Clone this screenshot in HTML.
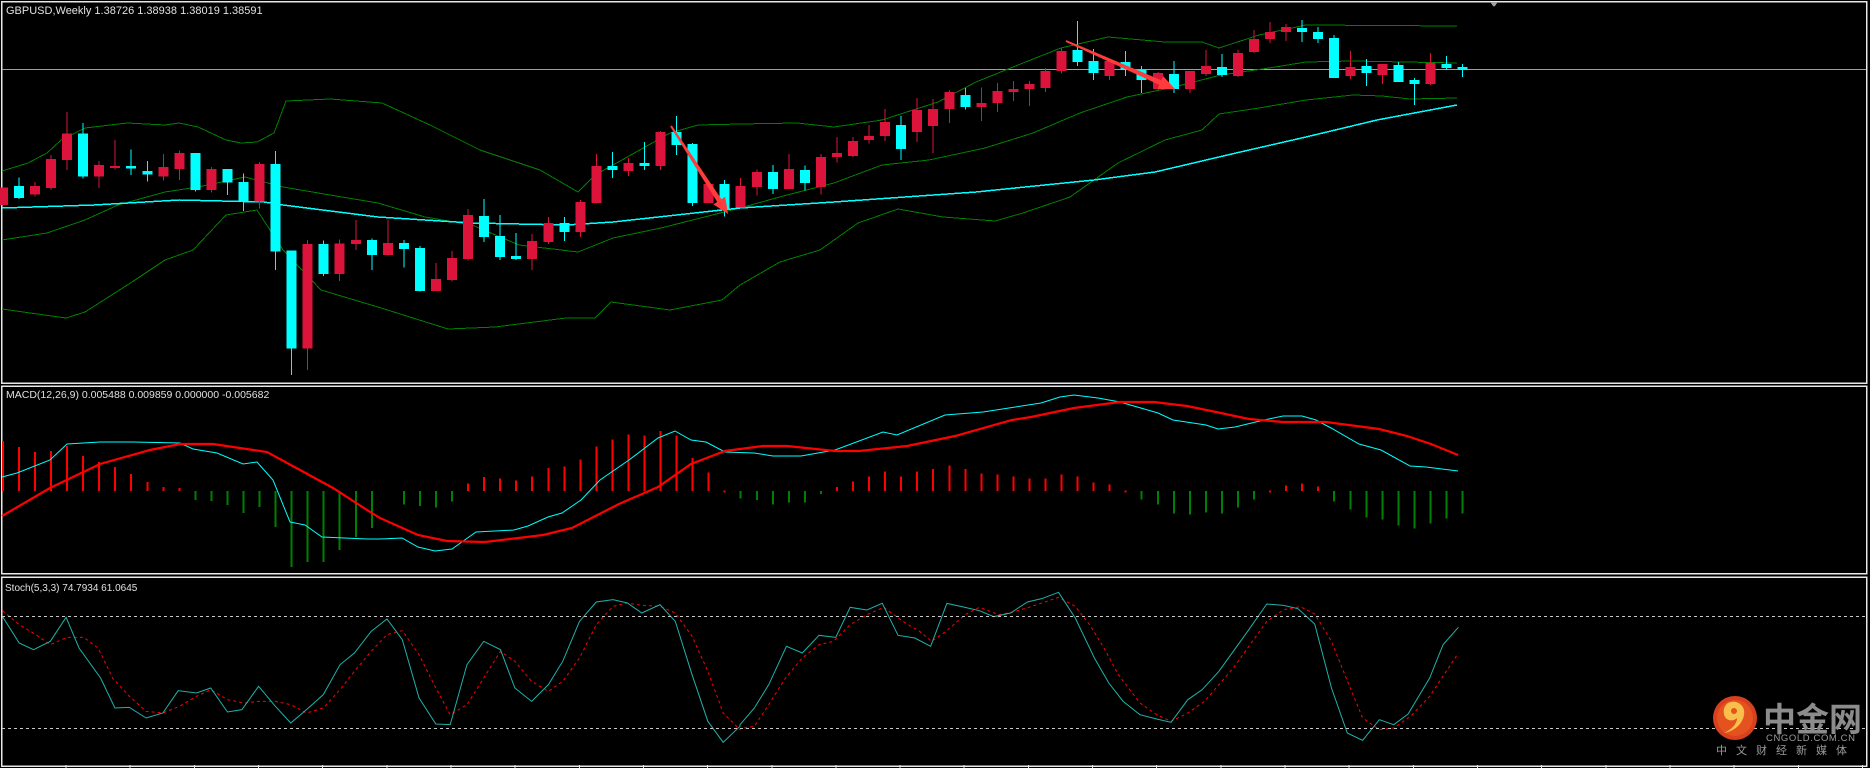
<!DOCTYPE html>
<html><head><meta charset="utf-8">
<style>
html,body{margin:0;padding:0;background:#000;width:1870px;height:768px;overflow:hidden}
svg{display:block}
text{font-family:"Liberation Sans","Noto Sans CJK SC",sans-serif}
</style></head><body>
<svg id="s" width="1870" height="768" viewBox="0 0 1870 768" xmlns="http://www.w3.org/2000/svg" shape-rendering="crispEdges">
<rect width="1870" height="768" fill="#000"/>
<g fill="none" stroke="#e8e8e8" stroke-width="1.5">
<rect x="1.5" y="1.5" width="1865" height="381.5"/>
<rect x="1.5" y="386" width="1865" height="187.5"/>
<rect x="1.5" y="577" width="1865" height="189"/>
</g>
<line x1="2" y1="69.5" x2="1866" y2="69.5" stroke="#a0a0a0" stroke-width="1"/>
<polygon points="1490,2 1498,2 1494,7" fill="#a0a0a0"/>
<g id="g"></g>
<text x="6" y="14" font-size="11" fill="#e0e0e0">GBPUSD,Weekly  1.38726 1.38938 1.38019 1.38591</text>
<text x="6" y="398" font-size="10.5" fill="#e0e0e0">MACD(12,26,9) 0.005488 0.009859 0.000000 -0.005682</text>
<text x="5" y="591" font-size="10" fill="#e0e0e0">Stoch(5,3,3) 74.7934 61.0645</text>
<line x1="2" y1="616.5" x2="1866" y2="616.5" stroke="#c8c8c8" stroke-dasharray="3,3"/>
<line x1="2" y1="728.5" x2="1866" y2="728.5" stroke="#c8c8c8" stroke-dasharray="3,3"/>
<g shape-rendering="auto">
<circle cx="1735" cy="718" r="22" fill="#d8401e"/>
<circle cx="1735" cy="718" r="18" fill="#e4531f"/>
<path d="M1728 703c8-4 18 2 16 12-2 10-10 16-20 18 8-4 13-9 13-15-4 4-12 3-13-4-1-5 1-9 4-11z" fill="#f8c04a"/>
<circle cx="1734" cy="711" r="3" fill="#e4531f"/>
<text x="1763" y="731" font-size="33" font-weight="bold" fill="#8c8c8c" font-family="'Noto Sans CJK SC',sans-serif">中金网</text>
<text x="1766" y="741" font-size="9.5" fill="#9a9a9a" letter-spacing="0.6">CNGOLD.COM.CN</text>
<text x="1716" y="754" font-size="11" fill="#9a9a9a" letter-spacing="9" font-family="'Noto Sans CJK SC',sans-serif">中文财经新媒体</text>
</g>
</svg>
<script>
var NS="http://www.w3.org/2000/svg",G=document.getElementById('g');
function el(t,a){var e=document.createElementNS(NS,t);for(var k in a)e.setAttribute(k,a[k]);G.appendChild(e);return e;}
function cx(i){return 2.9+16.04*i;}
var C1=[["R",262,315,262,315],["C",258,294,232,297],["R",258,284,246,290],["R",177,264,165,270],["R",101,180,36,210],["C",101,230,69,236],["R",195,230,183,264],["R",198,204,120,209],["C",198,206,148,225],["C",213,224,183,245],["R",201,230,162,242],["R",159,207,151,240],["C",159,270,159,275],["R",207,270,201,278],["C",207,248,207,285],["C",246,304,220,333],["R",192,304,186,326],["C",192,455,153,510],["C",452,746,452,825],["R",432,746,420,810],["C",432,522,422,528],["R",430,522,418,543],["R",420,432,360,450],["C",420,465,416,510],["R",429,465,360,466],["C",429,447,420,503],["C",444,573,438,575],["R",537,573,489,573],["R",474,540,453,544],["R",345,477,327,482],["C",348,411,297,426],["C",408,471,345,480],["C",468,477,399,480],["R",423,477,402,510],["R",369,426,351,432],["C",369,396,351,423],["R",306,396,300,411],["R",198,309,162,311],["C",198,210,156,234],["R",189,213,174,228],["C",189,198,126,210],["R",96,198,93,210],["C",96,135,48,165],["C",132,309,129,318],["R",252,309,252,309],["C",252,325,240,350],["R",258,322,234,322]];
var C2=[["R",486,531,478,557],["C",486,537,465,552],["R",477,537,432,537],["C",480,519,467,542],["R",441,531,432,554],["R",429,441,381,458],["R",393,438,381,441],["R",378,390,345,400],["R",336,378,297,393],["C",345,417,318,450],["R",300,366,264,396],["R",297,348,267,429],["R",246,297,240,339],["C",255,291,234,299],["R",279,291,232,333],["R",243,279,219,306],["R",237,246,213,273],["R",222,237,213,288],["R",183,234,174,246],["R",123,183,114,190],["C",120,156,33,168],["C",153,189,117,210],["R",153,198,150,210],["C",156,180,123,198],["C",180,210,168,249],["R",189,237,186,240],["C",192,237,153,249],["R",183,237,183,249],["R",168,192,120,198],["C",171,195,132,201],["R",129,198,120,201],["R",87,126,60,129],["R",66,87,36,99],["R",51,66,42,93],["C",54,66,30,96],["C",66,87,51,99],["C",84,204,75,204],["R",171,198,123,207],["C",168,189,147,228],["R",162,195,162,222],["C",165,216,156,216],["C",210,222,204,285],["R",159,222,129,225],["C",162,174,138,180],["C",171,180,162,201]];
function pl(pts,col,w,extra){var a={points:pts.map(function(p){return p[0]+","+p[1]}).join(" "),fill:"none",stroke:col,"stroke-width":w};for(var k in extra)a[k]=extra[k];el("polyline",a);}
// bands
pl([[2,171],[28,163],[47,153],[61,140],[85,128],[127,123],[165,125],[179,123],[198,127],[226,140],[241,143],[257,142],[274,133],[286,101],[330,99],[382,103],[430,125],[480,150],[540,170],[578,192],[595,175],[613,165],[670,133],[698,125],[740,124],[797,123],[834,127],[882,120],[938,102],[976,82],[1023,63],[1061,48],[1108,37],[1165,42],[1202,42],[1219,48],[1259,35],[1306,25],[1457,26]],"#008000",1);
pl([[2,240],[47,233],[85,220],[118,205],[165,192],[198,187],[245,177],[283,187],[330,195],[378,203],[425,217],[472,225],[519,245],[578,252],[613,238],[661,228],[740,208],[787,195],[834,183],[882,165],[929,160],[985,148],[1033,133],[1080,113],[1127,97],[1174,87],[1221,75],[1269,68],[1306,62],[1353,61],[1457,63]],"#008000",1);
pl([[2,309],[66,318],[85,312],[132,282],[165,260],[193,250],[226,215],[257,210],[283,250],[321,290],[378,307],[448,329],[495,327],[566,318],[595,318],[611,302],[670,310],[722,300],[740,285],[780,262],[820,250],[858,223],[898,209],[943,217],[995,221],[1023,213],[1070,197],[1118,163],[1165,140],[1202,130],[1219,114],[1259,108],[1306,100],[1353,95],[1382,96],[1410,99],[1457,98]],"#008000",1);
pl([[2,208],[94,205],[179,200],[264,202],[283,205],[378,217],[472,223],[566,225],[613,222],[740,208],[834,202],[976,192],[1094,180],[1155,172],[1236,153],[1306,137],[1377,120],[1457,105]],"#00ffff",1.5);
function candle(i,d,yb){var x=cx(i),c=d[0]=="R"?"#dc143c":"#00ffff";
var bt=yb+d[1]/3,bb=yb+d[2]/3,wt=yb+d[3]/3,wb=yb+d[4]/3;
el("line",{x1:x,y1:wt,x2:x,y2:wb,stroke:c,"stroke-width":1});
el("rect",{x:x-5,y:bt,width:10,height:Math.max(1.5,bb-bt),fill:c});}
C1.forEach(function(d,i){candle(i,d,100);});
C2.forEach(function(d,i){candle(47+i,d,10);});
function arrow(x1,y1,x2,y2){var dx=x2-x1,dy=y2-y1,L=Math.sqrt(dx*dx+dy*dy),ux=dx/L,uy=dy/L,px=-uy,py=ux,h=16,w=7;
var bx=x2-ux*h,by=y2-uy*h;
el("polygon",{points:[x1+px*1,y1+py*1,bx+px*2.5,by+py*2.5,bx+px*w,by+py*w,x2,y2,bx-px*w,by-py*w,bx-px*2.5,by-py*2.5,x1-px*1,y1-py*1].join(" "),fill:"#ff3b3b","shape-rendering":"auto"});}
arrow(671,126,728,214);arrow(1066,41,1175,89);
var Z=491;
var H1=[441,447,452,451,446,456,462,467,474,482,487,488,500,501,505,513,507,527,567,562,562,550,537,528];
var H6=[387,353,358,362,345,291,272,276,282,270,245,240,219,180,159,144,147,135,147,215,258,312,335,340,353,348,347,323,302,285,270,255,270,255,248,237,248,261,264,270,276,276,264,270,288,294,312];
var H7=[338,353,380,383,377,380,362,338,312,297,291,300,344,368,392,398,416,425,410,395,380];
function bar(i,y){var x=cx(i);var c=y<Z?"#ff0000":"#008000";var t=Math.min(y,Z),b=Math.max(y,Z);if(b-t<1.5){b=t+2;}el("rect",{x:x-1,y:t,width:2,height:b-t,fill:c});}
H1.forEach(function(y,i){bar(i,y);});
H6.forEach(function(z,i){if(i==0)return;bar(24+i,386+z/2.984);});
H7.forEach(function(z,i){bar(71+i,386+z/2.984);});
pl([[2,477],[17,473],[50,460],[67,444],[100,442],[133,442],[180,443],[193,449],[217,453],[243,464],[257,462],[273,480],[290,522],[305,525],[322,537],[367,539],[380,539],[402,538],[418,547],[435,551],[452,549],[476,532],[514,530],[528,526],[548,517],[562,513],[581,500],[600,480],[629,460],[658,438],[675,431],[691,440],[706,442],[725,452],[754,453],[773,456],[801,456],[835,450],[883,432],[897,435],[945,415],[983,412],[1041,403],[1060,397],[1074,395],[1098,398],[1120,402],[1158,413],[1173,420],[1206,425],[1218,429],[1235,427],[1264,420],[1283,416],[1302,416],[1316,420],[1331,428],[1359,444],[1381,450],[1410,466],[1426,467],[1458,471]],"#00ffff",1,{"shape-rendering":"auto"});
pl([[2,516],[50,488],[100,464],[150,450],[180,444],[213,444],[267,452],[300,470],[333,488],[367,510],[380,518],[418,535],[447,541],[485,542],[543,535],[572,528],[619,504],[658,487],[691,464],[725,451],[763,446],[787,446],[835,451],[859,451],[907,446],[955,436],[1012,420],[1031,417],[1074,408],[1120,402],[1154,402],[1187,406],[1216,412],[1249,419],[1283,422],[1326,422],[1379,429],[1407,436],[1431,444],[1458,455]],"#ff0000",2.2,{"shape-rendering":"auto"});
function cv8(a){return a.map(function(p){return [p[0]/2.088,578+p[1]/3];});}
function cv9(a){return a.map(function(p){return [740+p[0]/2.088,578+p[1]/3];});}
var m8=[[5,115],[40,195],[70,215],[105,190],[138,118],[165,210],[210,300],[240,390],[270,388],[305,420],[340,405],[372,338],[410,345],[440,330],[475,402],[505,395],[540,325],[575,385],[607,435],[640,395],[675,350],[710,260],[740,225],[775,160],[808,123],[840,185],[875,360],[910,438],[940,440],[975,260],[1010,190],[1045,215],[1075,330],[1110,370],[1145,320],[1175,250],[1210,130],[1245,72],[1280,65],[1310,75],[1340,105],[1378,80],[1410,130],[1445,290],[1478,430],[1510,493],[1545,445]];
var m9=[[0,440],[30,390],[60,320],[97,205],[130,225],[165,172],[200,178],[230,88],[265,96],[297,76],[330,172],[365,180],[398,205],[432,76],[470,88],[500,98],[530,116],[565,105],[600,72],[630,62],[665,43],[700,120],[740,240],[770,315],[800,370],[835,410],[870,423],[900,433],[935,365],[965,335],[1000,280],[1030,220],[1060,160],[1100,78],[1135,82],[1165,92],[1200,138],[1235,330],[1268,465],[1300,487],[1335,425],[1365,440],[1395,408],[1440,300],[1468,200],[1500,148]];
var s8=[[5,98],[40,140],[75,170],[105,200],[140,178],[175,178],[205,210],[235,300],[270,355],[305,400],[340,405],[375,385],[410,355],[440,335],[475,365],[510,375],[540,370],[575,370],[607,380],[640,405],[675,390],[710,335],[740,280],[775,220],[808,170],[840,158],[875,230],[910,330],[940,410],[975,380],[1010,300],[1045,220],[1075,250],[1110,310],[1145,340],[1175,310],[1210,240],[1245,140],[1280,85],[1310,75],[1340,82],[1378,85],[1410,105],[1445,175],[1478,280],[1510,405],[1545,455]];
var s9=[[0,452],[30,445],[60,380],[95,300],[130,240],[165,200],[195,190],[230,140],[265,110],[300,88],[340,130],[375,160],[400,190],[430,160],[470,110],[500,88],[540,110],[570,102],[610,85],[665,58],[700,85],[730,140],[760,210],[790,290],[835,375],[870,410],[900,430],[935,405],[970,370],[1000,320],[1030,270],[1060,210],[1100,130],[1135,95],[1170,86],[1200,108],[1235,190],[1260,280],[1300,420],[1335,455],[1365,450],[1400,415],[1440,355],[1470,290],[1500,225]];
pl(cv8(s8).concat(cv9(s9)),"#ff0000",1,{"stroke-dasharray":"3,3","shape-rendering":"auto"});
pl(cv8(m8).concat(cv9(m9)),"#20b2aa",1,{"shape-rendering":"auto"});
for(var x=66;x<1866;x+=64.16){el("line",{x1:x,y1:765,x2:x,y2:768,stroke:"#e8e8e8","stroke-width":1});}
</script>
</body></html>
